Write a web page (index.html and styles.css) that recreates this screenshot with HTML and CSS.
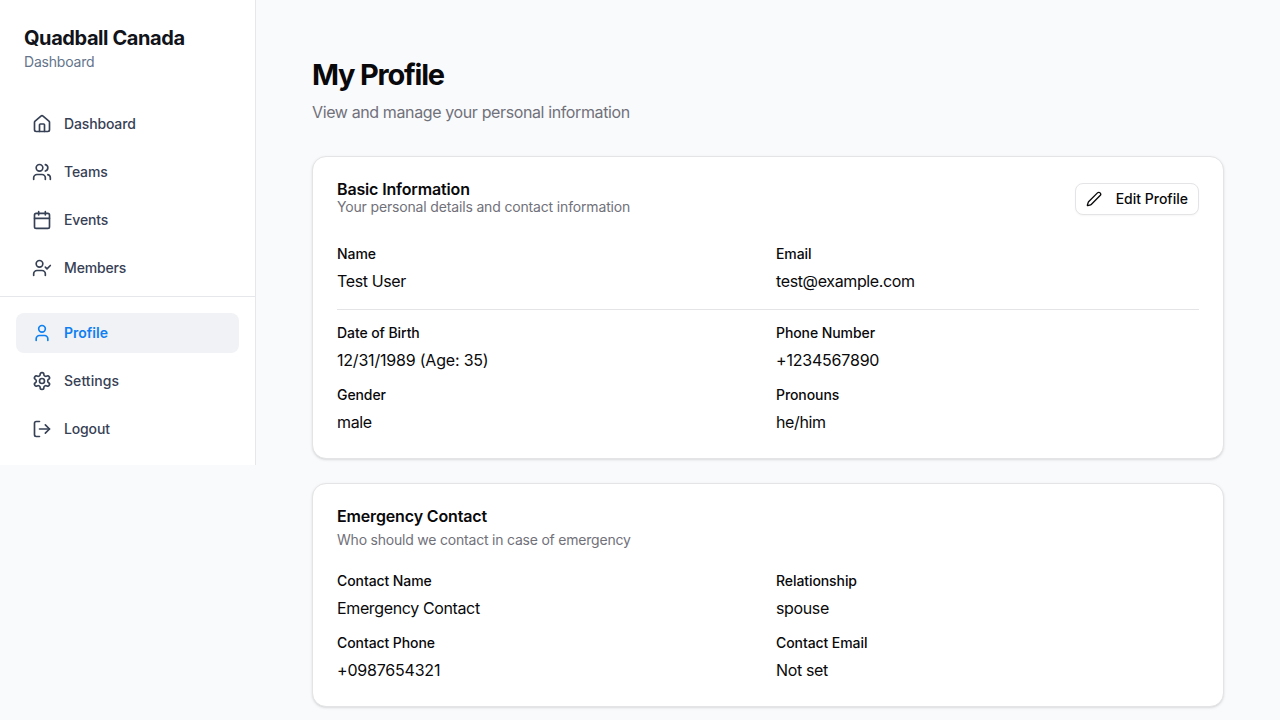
FILE: index.html
```html
<!DOCTYPE html>
<html lang="en">
<head>
<meta charset="utf-8">
<title>My Profile</title>
<link rel="stylesheet" href="styles.css">
</head>
<body>
<div class="app">
  <aside class="sidebar">
    <div class="brand">
      <div class="brand-name">Quadball Canada</div>
      <div class="brand-sub">Dashboard</div>
    </div>
    <nav class="nav">
      <a class="nav-item"><svg class="icon" viewBox="0 0 24 24"><path d="M15 21v-8a1 1 0 0 0-1-1h-4a1 1 0 0 0-1 1v8"/><path d="M3 10a2 2 0 0 1 .709-1.528l7-5.999a2 2 0 0 1 2.582 0l7 5.999A2 2 0 0 1 21 10v9a2 2 0 0 1-2 2H5a2 2 0 0 1-2-2z"/></svg><span>Dashboard</span></a>
      <a class="nav-item"><svg class="icon" viewBox="0 0 24 24"><path d="M16 21v-2a4 4 0 0 0-4-4H6a4 4 0 0 0-4 4v2"/><circle cx="9" cy="7" r="4"/><path d="M22 21v-2a4 4 0 0 0-3-3.87"/><path d="M16 3.13a4 4 0 0 1 0 7.75"/></svg><span>Teams</span></a>
      <a class="nav-item"><svg class="icon" viewBox="0 0 24 24"><path d="M8 2v4M16 2v4"/><rect x="3" y="4" width="18" height="18" rx="2"/><path d="M3 10h18"/></svg><span>Events</span></a>
      <a class="nav-item"><svg class="icon" viewBox="0 0 24 24"><path d="m16 11 2 2 4-4"/><path d="M16 21v-2a4 4 0 0 0-4-4H6a4 4 0 0 0-4 4v2"/><circle cx="9" cy="7" r="4"/></svg><span>Members</span></a>
    </nav>
    <div class="nav nav-footer">
      <a class="nav-item active"><svg class="icon" viewBox="0 0 24 24"><path d="M19 21v-2a4 4 0 0 0-4-4H9a4 4 0 0 0-4 4v2"/><circle cx="12" cy="7" r="4"/></svg><span>Profile</span></a>
      <a class="nav-item loose"><svg class="icon" viewBox="0 0 24 24"><path d="M12.22 2h-.44a2 2 0 0 0-2 2v.18a2 2 0 0 1-1 1.73l-.43.25a2 2 0 0 1-2 0l-.15-.08a2 2 0 0 0-2.73.73l-.22.38a2 2 0 0 0 .73 2.73l.15.1a2 2 0 0 1 1 1.72v.51a2 2 0 0 1-1 1.74l-.15.09a2 2 0 0 0-.73 2.73l.22.38a2 2 0 0 0 2.73.73l.15-.08a2 2 0 0 1 2 0l.43.25a2 2 0 0 1 1 1.73V20a2 2 0 0 0 2 2h.44a2 2 0 0 0 2-2v-.18a2 2 0 0 1 1-1.73l.43-.25a2 2 0 0 1 2 0l.15.08a2 2 0 0 0 2.73-.73l.22-.39a2 2 0 0 0-.73-2.73l-.15-.08a2 2 0 0 1-1-1.74v-.5a2 2 0 0 1 1-1.74l.15-.09a2 2 0 0 0 .73-2.73l-.22-.38a2 2 0 0 0-2.73-.73l-.15.08a2 2 0 0 1-2 0l-.43-.25a2 2 0 0 1-1-1.73V4a2 2 0 0 0-2-2z"/><circle cx="12" cy="12" r="3"/></svg><span>Settings</span></a>
      <a class="nav-item"><svg class="icon" viewBox="0 0 24 24"><path d="M9 21H5a2 2 0 0 1-2-2V5a2 2 0 0 1 2-2h4"/><path d="m16 17 5-5-5-5"/><path d="M21 12H9"/></svg><span>Logout</span></a>
    </div>
  </aside>
  <main class="main">
    <header class="page-head">
      <h1 class="page-title">My Profile</h1>
      <p class="page-sub">View and manage your personal information</p>
    </header>
    <section class="card">
      <div class="card-head">
        <div>
          <h2 class="card-title">Basic Information</h2>
          <p class="card-desc">Your personal details and contact information</p>
        </div>
        <button class="btn"><svg class="icon icon-sm" viewBox="0 0 24 24"><path d="M21.174 6.812a1 1 0 0 0-3.986-3.987L3.842 16.174a2 2 0 0 0-.5.83l-1.321 4.352a.5.5 0 0 0 .623.622l4.353-1.320a2 2 0 0 0 .83-.497z"/></svg><span>Edit Profile</span></button>
      </div>
      <div class="fields">
        <div class="field"><span class="label">Name</span><span class="value">Test User</span></div>
        <div class="field"><span class="label">Email</span><span class="value">test@example.com</span></div>
      </div>
      <hr class="rule">
      <div class="fields">
        <div class="field"><span class="label">Date of Birth</span><span class="value numeric">12/31/1989 (Age: 35)</span></div>
        <div class="field"><span class="label">Phone Number</span><span class="value numeric">+1234567890</span></div>
        <div class="field"><span class="label">Gender</span><span class="value">male</span></div>
        <div class="field"><span class="label">Pronouns</span><span class="value">he/him</span></div>
      </div>
    </section>
    <section class="card">
      <div class="card-head stacked">
        <h2 class="card-title">Emergency Contact</h2>
        <p class="card-desc">Who should we contact in case of emergency</p>
      </div>
      <div class="fields">
        <div class="field"><span class="label">Contact Name</span><span class="value">Emergency Contact</span></div>
        <div class="field"><span class="label">Relationship</span><span class="value">spouse</span></div>
        <div class="field"><span class="label">Contact Phone</span><span class="value numeric">+0987654321</span></div>
        <div class="field"><span class="label">Contact Email</span><span class="value">Not set</span></div>
      </div>
    </section>
  </main>
</div>
</body>
</html>
```
FILE: styles.css
```css
* { box-sizing: border-box; margin: 0; }
body {
  min-height: 720px;
  background: #f9fafc;
  color: #09090b;
  font-family: Inter, "Liberation Sans", sans-serif;
  font-size: 16px;
  line-height: 24px;
}
.app { display: flex; align-items: flex-start; }
.sidebar {
  width: 256px;
  flex: none;
  background: #fff;
  border-right: 1px solid #e5e7eb;
}
.brand { padding: 24px; }
.brand-name { font-size: 20px; line-height: 28px; font-weight: 700; color: #11141a; letter-spacing: -0.42px; }
.brand-sub { font-size: 14px; line-height: 20px; color: #64748b; letter-spacing: -0.2px; }
.nav { display: flex; flex-direction: column; gap: 8px; padding: 8px 16px; }
.nav-footer { border-top: 1px solid #e5e7eb; padding: 16px; }
.nav-item {
  display: flex;
  align-items: center;
  gap: 12px;
  height: 40px;
  padding: 0 16px;
  border-radius: 8px;
  font-size: 14px;
  font-weight: 500;
  color: #374155;
  letter-spacing: -0.15px;
}
.nav-item.loose { letter-spacing: 0.06px; }
.nav-item.active { background: #f1f2f6; color: #0f80f2; font-weight: 600; letter-spacing: 0; }
.icon {
  width: 20px;
  height: 20px;
  flex: none;
  fill: none;
  stroke: currentColor;
  stroke-width: 2;
  stroke-linecap: round;
  stroke-linejoin: round;
}
.icon-sm { width: 16px; height: 16px; }
.main { flex: 1; display: flex; flex-direction: column; gap: 24px; padding: 56px 56px 13px; }
.page-head { padding-bottom: 8px; }
.page-title { font-size: 29px; line-height: 38px; font-weight: 700; letter-spacing: -1.22px; }
.page-sub { margin-top: 6px; color: #71717a; letter-spacing: -0.38px; }
.card {
  background: #fff;
  border: 1px solid #e4e4e7;
  border-radius: 14px;
  padding: 24px;
  box-shadow: 0 1px 3px rgba(0, 0, 0, 0.1), 0 1px 2px -1px rgba(0, 0, 0, 0.1);
}
.card-head { display: flex; justify-content: space-between; align-items: center; margin-bottom: 30px; }
.card-head.stacked { flex-direction: column; align-items: flex-start; gap: 6px; margin-bottom: 24px; }
.card-title { font-size: 16px; line-height: 16px; font-weight: 600; letter-spacing: -0.15px; }
.card-desc { font-size: 14px; line-height: 20px; color: #71717a; letter-spacing: -0.16px; }
.stacked .card-desc { letter-spacing: -0.21px; }
.btn {
  display: flex;
  align-items: center;
  justify-content: space-between;
  width: 124px;
  height: 32px;
  padding: 0 10px;
  border: 1px solid #e4e4e7;
  border-radius: 8px;
  background: #fff;
  color: #09090b;
  font: 500 14px/20px Inter, "Liberation Sans", sans-serif;
  box-shadow: 0 1px 2px rgba(0, 0, 0, 0.04);
}
.fields { display: grid; grid-template-columns: 1fr 1fr; gap: 16px; }
.field { display: flex; flex-direction: column; gap: 8px; }
.label { font-size: 14px; line-height: 14px; font-weight: 500; letter-spacing: -0.08px; }
.value { letter-spacing: -0.37px; }
.value.numeric { letter-spacing: -0.2px; }
.rule { height: 1px; border: 0; background: #e4e4e7; margin: 16px 0; }
```
